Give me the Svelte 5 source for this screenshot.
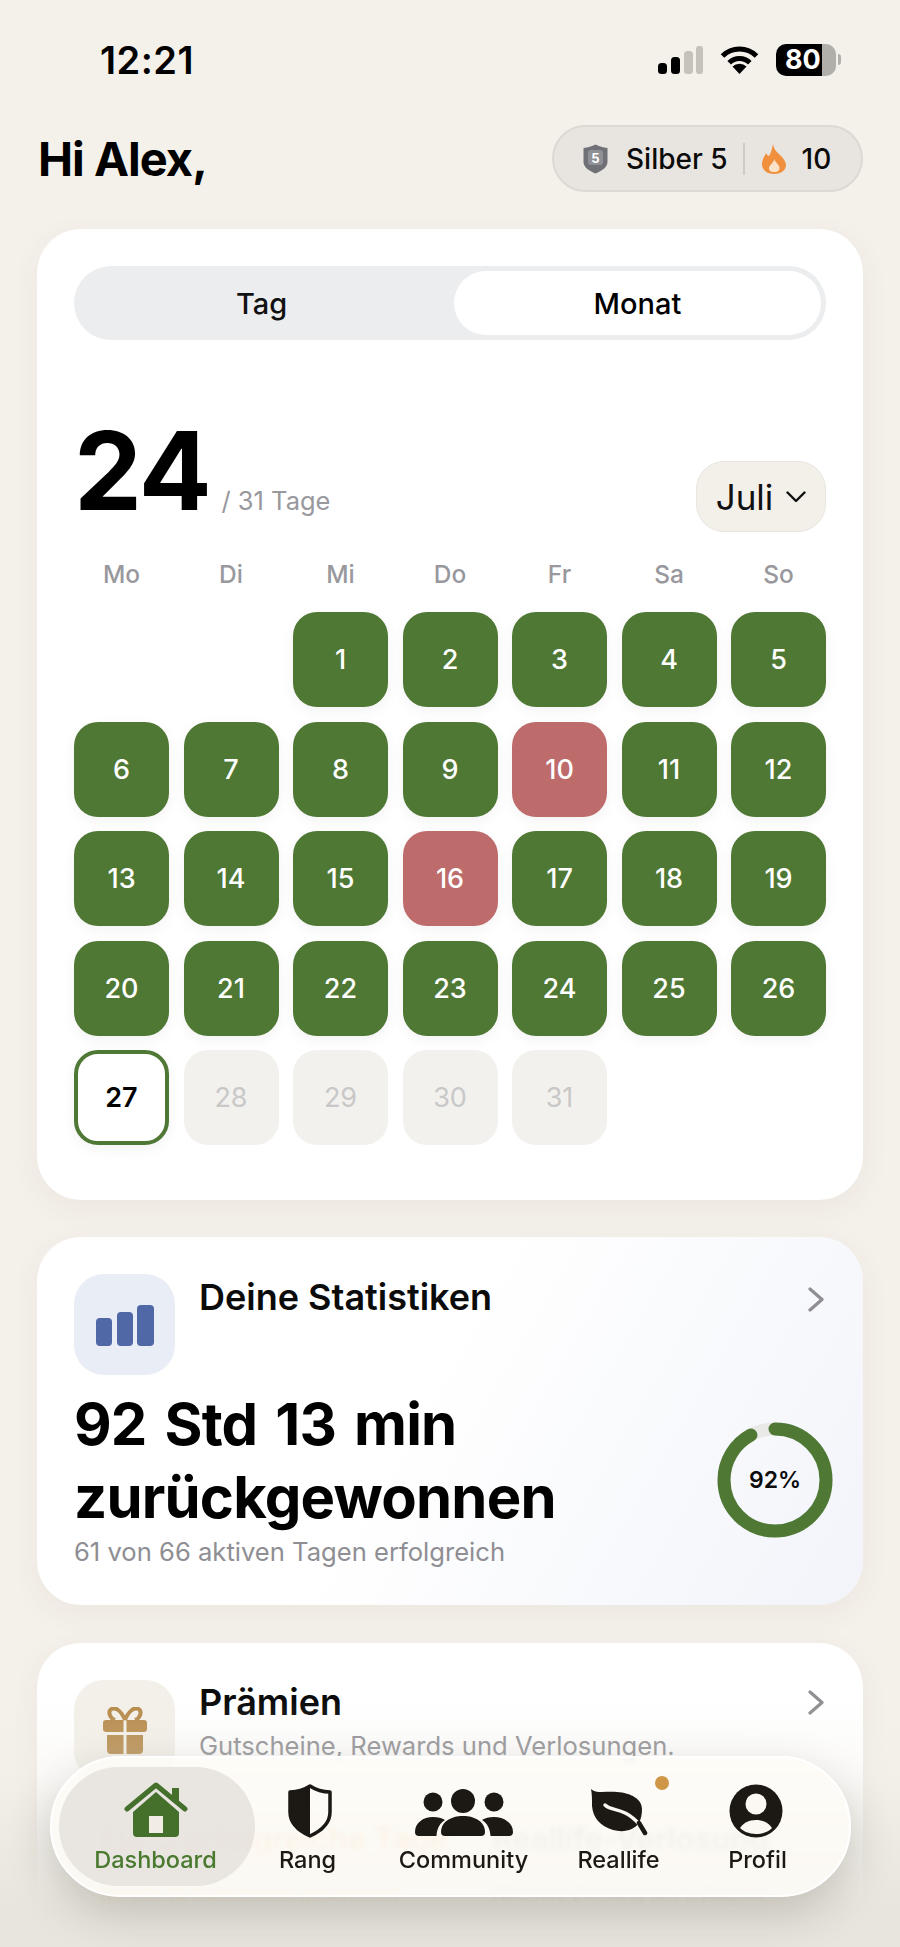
<script>
  const weekdays = ['Mo', 'Di', 'Mi', 'Do', 'Fr', 'Sa', 'So'];
  const missed = [10, 16];
  const today = 27;

  const days = [];
  for (let i = 1; i <= 31; i++) {
    let kind = 'done';
    if (missed.includes(i)) kind = 'missed';
    if (i === today) kind = 'today';
    if (i > today) kind = 'future';
    days.push({ n: i, kind });
  }

  const nav = [
    { id: 'home', label: 'Dashboard' },
    { id: 'rank', label: 'Rang' },
    { id: 'community', label: 'Community' },
    { id: 'leaf', label: 'Reallife' },
    { id: 'profile', label: 'Profil' },
  ];

  const ringLength = 2 * Math.PI * 51;
  const ringDash = ringLength * 0.92;
</script>

<div class="page">
  <div class="status">
    <span class="time">12:21</span>
    <div class="status-icons">
      <svg width="45" height="28" viewBox="0 0 45 28">
        <rect x="0" y="17" width="9" height="11" rx="3.5" fill="#000" />
        <rect x="13" y="11" width="9" height="17" rx="3.5" fill="#000" />
        <rect x="26" y="5" width="9" height="23" rx="3.5" fill="#c5c2bc" />
        <rect x="38" y="0" width="7" height="28" rx="3" fill="#c5c2bc" />
      </svg>
      <svg width="39" height="28" viewBox="0 0 39 28">
        <path d="M2.5 10 A24 24 0 0 1 36.5 10" fill="none" stroke="#000" stroke-width="5" />
        <path d="M9.2 16.8 A14.5 14.5 0 0 1 29.8 16.8" fill="none" stroke="#000" stroke-width="5" />
        <path d="M19.5 28 L12.5 20.5 A10 10 0 0 1 26.5 20.5 Z" fill="#000" />
      </svg>
      <div class="battery">
        <div class="battery-body"><span>80</span></div>
        <div class="battery-tip"></div>
      </div>
    </div>
  </div>

  <header class="top">
    <h1>Hi Alex,</h1>
    <div class="rank-pill">
      <svg width="25" height="30" viewBox="0 0 25 30">
        <path d="M12.5 0.5 C16 2.5 20 3.5 24.5 4 V18 C24.5 23 19 27 12.5 29.5 C6 27 0.5 23 0.5 18 V4 C5 3.5 9 2.5 12.5 0.5 Z" fill="#707177" />
        <rect x="5" y="6" width="15" height="15" rx="3" fill="#8f9096" />
        <text x="12.5" y="18.5" text-anchor="middle" class="badge-num">5</text>
      </svg>
      <span class="rank-name">Silber 5</span>
      <span class="rank-sep"></span>
      <svg width="24" height="30" viewBox="0 0 24 30">
        <path d="M11 0 C12 6 15 8 18 11 C22 15 24 18 24 21 C24 27 18 30 12 30 C5 30 0 26 0 20 C0 15 3 12 4 9 C5 11 6 12 7 12 C9 9 10 5 11 0 Z" fill="#f0903c" />
        <path d="M12.5 15 C13 19 17.5 20 17.5 24 C17.5 27 15 28 12 28 C9 28 7 27 7 24 C7 21 11 20 12.5 15 Z" fill="#fbe2c9" />
      </svg>
      <span class="streak">10</span>
    </div>
  </header>

  <section class="card month">
    <div class="segment">
      <button class="seg-btn">Tag</button>
      <button class="seg-btn active">Monat</button>
    </div>

    <div class="month-head">
      <div class="count">
        <span class="count-big">24</span>
        <span class="count-rest">/ 31 Tage</span>
      </div>
      <button class="month-select">
        Juli
        <svg width="20" height="12" viewBox="0 0 20 12">
          <path d="M1.5 1.5 L10 10 L18.5 1.5" fill="none" stroke="#111" stroke-width="2.4" stroke-linecap="round" stroke-linejoin="round" />
        </svg>
      </button>
    </div>

    <div class="weekdays">
      {#each weekdays as w}
        <span>{w}</span>
      {/each}
    </div>

    <div class="grid">
      <div></div>
      <div></div>
      {#each days as d}
        <div class="day {d.kind}">{d.n}</div>
      {/each}
    </div>
  </section>

  <section class="card stats">
    <div class="row-head">
      <div class="icon-box blue">
        <svg width="58" height="41" viewBox="0 0 58 41">
          <rect x="0" y="13" width="16" height="28" rx="4" fill="#5069a6" />
          <rect x="21" y="7" width="16" height="34" rx="4" fill="#5069a6" />
          <rect x="41" y="0" width="17" height="41" rx="4" fill="#5069a6" />
        </svg>
      </div>
      <h2>Deine Statistiken</h2>
      <svg class="chev" width="16" height="25" viewBox="0 0 16 25">
        <path d="M2 2 L14 12.5 L2 23" fill="none" stroke="#8e8e93" stroke-width="3.2" stroke-linecap="round" stroke-linejoin="round" />
      </svg>
    </div>
    <div class="stats-body">
      <div>
        <p class="headline">92 Std 13 min<br />zurückgewonnen</p>
        <p class="muted">61 von 66 aktiven Tagen erfolgreich</p>
      </div>
      <div class="ring">
        <svg width="116" height="116" viewBox="0 0 116 116">
          <circle cx="58" cy="58" r="51" fill="none" stroke="#e9e9e8" stroke-width="13" />
          <circle cx="58" cy="58" r="51" fill="none" stroke="#4f7834" stroke-width="13" stroke-linecap="round"
            stroke-dasharray="{ringDash} {ringLength}" transform="rotate(-90 58 58)" />
        </svg>
        <span>92%</span>
      </div>
    </div>
  </section>

  <section class="card rewards">
    <div class="row-head">
      <div class="icon-box sand">
        <svg width="44" height="47" viewBox="0 0 44 47">
          <path d="M22 13 C18 3 12 0 8.5 2 C5 4 6 11 12 13 M22 13 C26 3 32 0 35.5 2 C39 4 38 11 32 13" fill="none" stroke="#b68a4b" stroke-width="4" />
          <path d="M3 13 H20.5 V25 H3 A3 3 0 0 1 0 22 V16 A3 3 0 0 1 3 13 Z M23.5 13 H41 A3 3 0 0 1 44 16 V22 A3 3 0 0 1 41 25 H23.5 Z" fill="#b68a4b" />
          <path d="M4 28 H20.5 V47 H8 A4 4 0 0 1 4 43 Z M23.5 28 H40 V43 A4 4 0 0 1 36 47 H23.5 Z" fill="#b68a4b" />
        </svg>
      </div>
      <div class="rewards-text">
        <h2>Prämien</h2>
        <p class="muted">Gutscheine, Rewards und Verlosungen.</p>
      </div>
      <svg class="chev" width="16" height="25" viewBox="0 0 16 25">
        <path d="M2 2 L14 12.5 L2 23" fill="none" stroke="#8e8e93" stroke-width="3.2" stroke-linecap="round" stroke-linejoin="round" />
      </svg>
    </div>
    <div class="rewards-links">
      <div class="link-col orange">
        <strong>Für 5 erfolgreiche Tage</strong>
        <small>Bereits 10 Gutscheine gesammelt</small>
      </div>
      <div class="link-col">
        <strong>Reallife-Verlosung</strong>
        <small>Nächste Ziehung am 1. August</small>
      </div>
    </div>
  </section>

  <div class="fade"></div>

  <nav class="tabbar">
    {#each nav as item}
      <div class="tab" class:active={item.id === 'home'}>
        <span class="tab-icon">
          {#if item.id === 'home'}
            <svg width="64" height="56" viewBox="0 0 64 56">
              <rect x="48" y="6" width="7" height="14" fill="#45702c" />
              <path d="M9 30 L32 10 L55 30 V51 A4 4 0 0 1 51 55 H13 A4 4 0 0 1 9 51 Z" fill="#45702c" />
              <rect x="25" y="34" width="14" height="17" fill="#f1ece4" />
              <path d="M3 27 L32 3 L61 27" fill="none" stroke="#45702c" stroke-width="5" stroke-linecap="round" stroke-linejoin="round" />
            </svg>
          {:else if item.id === 'rank'}
            <svg class="shield" width="44" height="54" viewBox="0 0 44 54">
              <path d="M22 2 C28 6 35 8 42 8 V28 C42 39 33 47 22 52 C11 47 2 39 2 28 V8 C9 8 16 6 22 2 Z" fill="none" stroke="#1c1915" stroke-width="3.5" stroke-linejoin="round" />
              <path d="M22 2 C16 6 9 8 2 8 V28 C2 39 11 47 22 52 Z" fill="#1c1915" />
            </svg>
          {:else if item.id === 'community'}
            <svg width="100" height="50" viewBox="0 0 100 50">
              <circle cx="49" cy="13" r="12" fill="#1c1915" />
              <circle cx="19" cy="14" r="9.5" fill="#1c1915" />
              <circle cx="80" cy="14" r="9.5" fill="#1c1915" />
              <path d="M27 44 C27 34 37 28 49 28 C61 28 71 34 71 44 A4 4 0 0 1 67 48 H31 A4 4 0 0 1 27 44 Z" fill="#1c1915" />
              <path d="M1 44 C1 35 9 29 19 29 C24 29 28 30 31 32 C26 35 23 40 22.5 48 H5 A4 4 0 0 1 1 44 Z" fill="#1c1915" />
              <path d="M99 44 C99 35 90 29 80 29 C75 29 71 30 68 32 C73 35 76 40 76.5 48 H95 A4 4 0 0 0 99 44 Z" fill="#1c1915" />
            </svg>
          {:else if item.id === 'leaf'}
            <svg width="58" height="50" viewBox="0 0 58 50">
              <path d="M1 1 C6 6 16 3 27 4 C41 5 52 11 52 21 C52 26 51 31 49 35 C44 42 34 45 23 42 C10 38 3 30 2 18 C2 11 2 6 1 1 Z" fill="#1c1915" />
              <path d="M15 17 C22 24 33 18 50 37" fill="none" stroke="#fbf8f3" stroke-width="3.4" stroke-linecap="round" />
              <path d="M49 35 L55 45" fill="none" stroke="#1c1915" stroke-width="4.5" stroke-linecap="round" />
            </svg>
            <i class="dot"></i>
          {:else}
            <svg class="avatar" width="54" height="54" viewBox="0 0 54 54">
              <circle cx="27" cy="27" r="26.5" fill="#1c1915" />
              <circle cx="27" cy="20" r="10.5" fill="#fbf8f3" />
              <path d="M11 44 C15 38 21 36 27 36 C33 36 39 38 43 44 C39 48 33 50 27 50 C21 50 15 48 11 44 Z" fill="#fbf8f3" />
            </svg>
          {/if}
        </span>
        <span class="tab-label">{item.label}</span>
      </div>
    {/each}
  </nav>
</div>

<style>
  :global(body) {
    margin: 0;
    background: #f4f0ea;
  }

  .page {
    position: relative;
    height: 1947px;
    overflow: hidden;
    background: #f4f0ea;
    font-family: Inter, "Liberation Sans", sans-serif;
    color: #0b0b0b;
  }

  .status {
    display: flex;
    justify-content: space-between;
    align-items: center;
    height: 33px;
    padding: 43px 59px 0 100px;
  }

  .time {
    font-size: 38px;
    font-weight: 600;
    letter-spacing: 0.5px;
    color: #000;
  }

  .status-icons {
    display: flex;
    align-items: center;
    gap: 17px;
  }

  .battery {
    display: flex;
    align-items: center;
    gap: 2px;
  }

  .battery-body {
    width: 60px;
    height: 32px;
    border-radius: 10px;
    background: linear-gradient(to right, #000 77%, #b1afaa 77%);
    display: flex;
    align-items: center;
    padding-left: 9px;
    box-sizing: border-box;
    color: #fff;
    font-size: 27px;
    font-weight: 700;
  }

  .battery-tip {
    width: 3px;
    height: 11px;
    border-radius: 0 3px 3px 0;
    background: #b1afaa;
  }

  .top {
    display: flex;
    justify-content: space-between;
    align-items: center;
    padding: 49px 37px 37px 38px;
    height: 67px;
  }

  h1 {
    margin: 0;
    font-size: 47px;
    font-weight: 700;
    letter-spacing: -1px;
    color: #000;
  }

  .rank-pill {
    display: flex;
    align-items: center;
    box-sizing: border-box;
    width: 311px;
    height: 67px;
    padding: 0 28px 0 29px;
    border: 2px solid #dcd9d3;
    border-radius: 34px;
    background: #e8e5e0;
  }

  .rank-pill svg {
    flex: none;
  }

  .badge-num {
    font-size: 13px;
    font-weight: 700;
    fill: #fff;
    font-family: Inter, sans-serif;
  }

  .rank-name {
    margin-left: 18px;
    font-size: 28px;
    font-weight: 500;
    white-space: nowrap;
  }

  .rank-sep {
    flex: none;
    width: 2px;
    height: 32px;
    margin: 0 17px 0 15px;
    background: #cfccc6;
  }

  .streak {
    margin-left: 16px;
    font-size: 28px;
    font-weight: 500;
  }

  .card {
    margin: 0 37px;
    border-radius: 44px;
    background: #fff;
    box-shadow: 0 8px 30px rgba(120, 100, 70, 0.06);
    box-sizing: border-box;
  }

  .month {
    height: 971px;
    padding: 37px;
  }

  .segment {
    position: relative;
    display: grid;
    grid-template-columns: 380px 1fr;
    height: 74px;
    padding: 5px 5px 5px 0;
    box-sizing: border-box;
    border-radius: 37px;
    background: #ecedef;
  }

  .seg-btn {
    border: 0;
    padding: 0 5px 0 0;
    background: none;
    font: inherit;
    font-size: 29px;
    font-weight: 500;
    color: #111;
  }

  .seg-btn.active {
    padding: 0;
    border-radius: 32px;
    background: #fff;
    color: #000;
  }

  .month-head {
    display: flex;
    justify-content: space-between;
    align-items: flex-end;
    height: 117px;
    margin-top: 70px;
  }

  .count {
    display: flex;
    align-items: baseline;
    gap: 11px;
    line-height: 1;
    margin-bottom: -2px;
  }

  .count-big {
    font-size: 108px;
    font-weight: 700;
    letter-spacing: -1.5px;
    color: #000;
    line-height: 117px;
  }

  .count-rest {
    font-size: 25.5px;
    color: #98989d;
  }

  .month-select {
    display: flex;
    align-items: center;
    justify-content: center;
    gap: 13px;
    width: 130px;
    height: 71px;
    margin-bottom: -5px;
    padding: 0;
    border: 1.5px solid #e9e5df;
    border-radius: 28px;
    background: #f3efe9;
    font: inherit;
    font-size: 35px;
    color: #111;
  }

  .weekdays {
    display: grid;
    grid-template-columns: repeat(7, 95px);
    column-gap: 14.5px;
    margin-top: 33px;
    height: 29px;
    line-height: 29px;
    font-size: 24.5px;
    font-weight: 500;
    color: #98989d;
    text-align: center;
  }

  .grid {
    display: grid;
    grid-template-columns: repeat(7, 95px);
    grid-auto-rows: 95px;
    gap: 14.5px;
    margin-top: 23px;
  }

  .day {
    display: flex;
    align-items: center;
    justify-content: center;
    box-sizing: border-box;
    border-radius: 24px;
    font-size: 27px;
    font-weight: 500;
    color: #fff;
    box-shadow: 0 4px 14px rgba(0, 0, 0, 0.05);
  }

  .day.done {
    background: #4f7834;
  }

  .day.missed {
    background: #bd6b6b;
  }

  .day.today {
    border: 4px solid #4f7834;
    background: #fff;
    color: #000;
    font-weight: 600;
  }

  .day.future {
    background: #f3f1ee;
    color: #c8c8c8;
    font-weight: 400;
    box-shadow: none;
  }

  .stats {
    height: 368px;
    margin-top: 37px;
    padding: 37px;
    background: linear-gradient(120deg, #fff 45%, #f2f4fa 100%);
  }

  .row-head {
    position: relative;
    display: flex;
    gap: 24px;
  }

  .icon-box {
    flex: none;
    display: flex;
    align-items: center;
    justify-content: center;
    width: 101px;
    height: 101px;
    border-radius: 30px;
  }

  .icon-box.blue {
    background: #e9edf6;
  }

  .icon-box.blue svg {
    margin-top: 2px;
  }

  .icon-box.sand {
    background: #f3f0ea;
  }

  h2 {
    margin: -1px 0 0;
    font-size: 36px;
    line-height: 48px;
    font-weight: 600;
  }

  .chev {
    position: absolute;
    right: 2px;
    top: 13px;
  }

  .stats-body {
    display: flex;
    justify-content: space-between;
    align-items: flex-start;
    margin-top: 13px;
  }

  .headline {
    margin: 0;
    font-size: 58px;
    line-height: 73px;
    font-weight: 700;
    letter-spacing: -0.8px;
    word-spacing: 5px;
    color: #000;
  }

  .muted {
    margin: 0;
    font-size: 25.6px;
    color: #8e8e93;
  }

  .stats .muted {
    margin-top: 2px;
  }

  .ring {
    position: relative;
    display: flex;
    width: 116px;
    height: 116px;
    margin-top: 34px;
    margin-right: -7px;
  }

  .ring span {
    position: absolute;
    inset: 0;
    display: flex;
    align-items: center;
    justify-content: center;
    font-size: 23px;
    font-weight: 600;
  }

  .rewards {
    height: 420px;
    margin-top: 38px;
    padding: 37px;
  }

  .rewards-text p {
    margin-top: 4px;
  }

  .rewards h2 {
    margin-top: -2px;
  }

  .rewards .chev {
    top: 10px;
  }

  .rewards-links {
    display: flex;
    gap: 45px;
    margin-top: 39px;
    padding-left: 26px;
    filter: blur(1px);
  }

  .link-col {
    display: flex;
    flex-direction: column;
    gap: 26px;
    color: #777;
  }

  .link-col.orange {
    color: #ff8a1e;
  }

  .link-col strong {
    font-size: 31px;
    font-weight: 600;
    white-space: nowrap;
  }

  .link-col small {
    font-size: 19px;
    white-space: nowrap;
  }

  .fade {
    position: absolute;
    left: 0;
    right: 0;
    top: 1700px;
    bottom: 0;
    background: linear-gradient(to bottom, rgba(240, 237, 231, 0) 0%, rgba(240, 237, 231, 0.3) 30%, #e8e5dd 85%);
  }

  .tabbar {
    position: absolute;
    left: 50px;
    top: 1756px;
    width: 801px;
    height: 141px;
    box-sizing: border-box;
    display: grid;
    grid-template-columns: 196px 108px 204px 106px 172px;
    padding: 9px 0 9px 7px;
    border: 2px solid #fff;
    border-radius: 71px;
    background: rgba(254, 251, 247, 0.84);
    backdrop-filter: blur(2px);
    box-shadow: 0 16px 44px rgba(60, 55, 40, 0.22);
  }

  .tab {
    display: flex;
    flex-direction: column;
    align-items: center;
    padding-right: 3px;
    color: #1c1915;
  }

  .tab.active {
    border-radius: 60px;
    background: rgba(228, 224, 217, 0.8);
    color: #4a7a30;
  }

  .tab-icon {
    position: relative;
    display: flex;
    align-items: flex-end;
    justify-content: center;
    height: 63px;
    margin-top: 8px;
  }

  .shield {
    margin-left: 4px;
  }

  .avatar {
    margin-left: -3px;
  }

  .tab-label {
    margin-top: 8px;
    font-size: 23.5px;
    line-height: 28px;
    font-weight: 500;
  }

  .dot {
    position: absolute;
    top: 1px;
    right: -21px;
    width: 14px;
    height: 14px;
    border-radius: 50%;
    background: #cf9647;
  }
</style>
